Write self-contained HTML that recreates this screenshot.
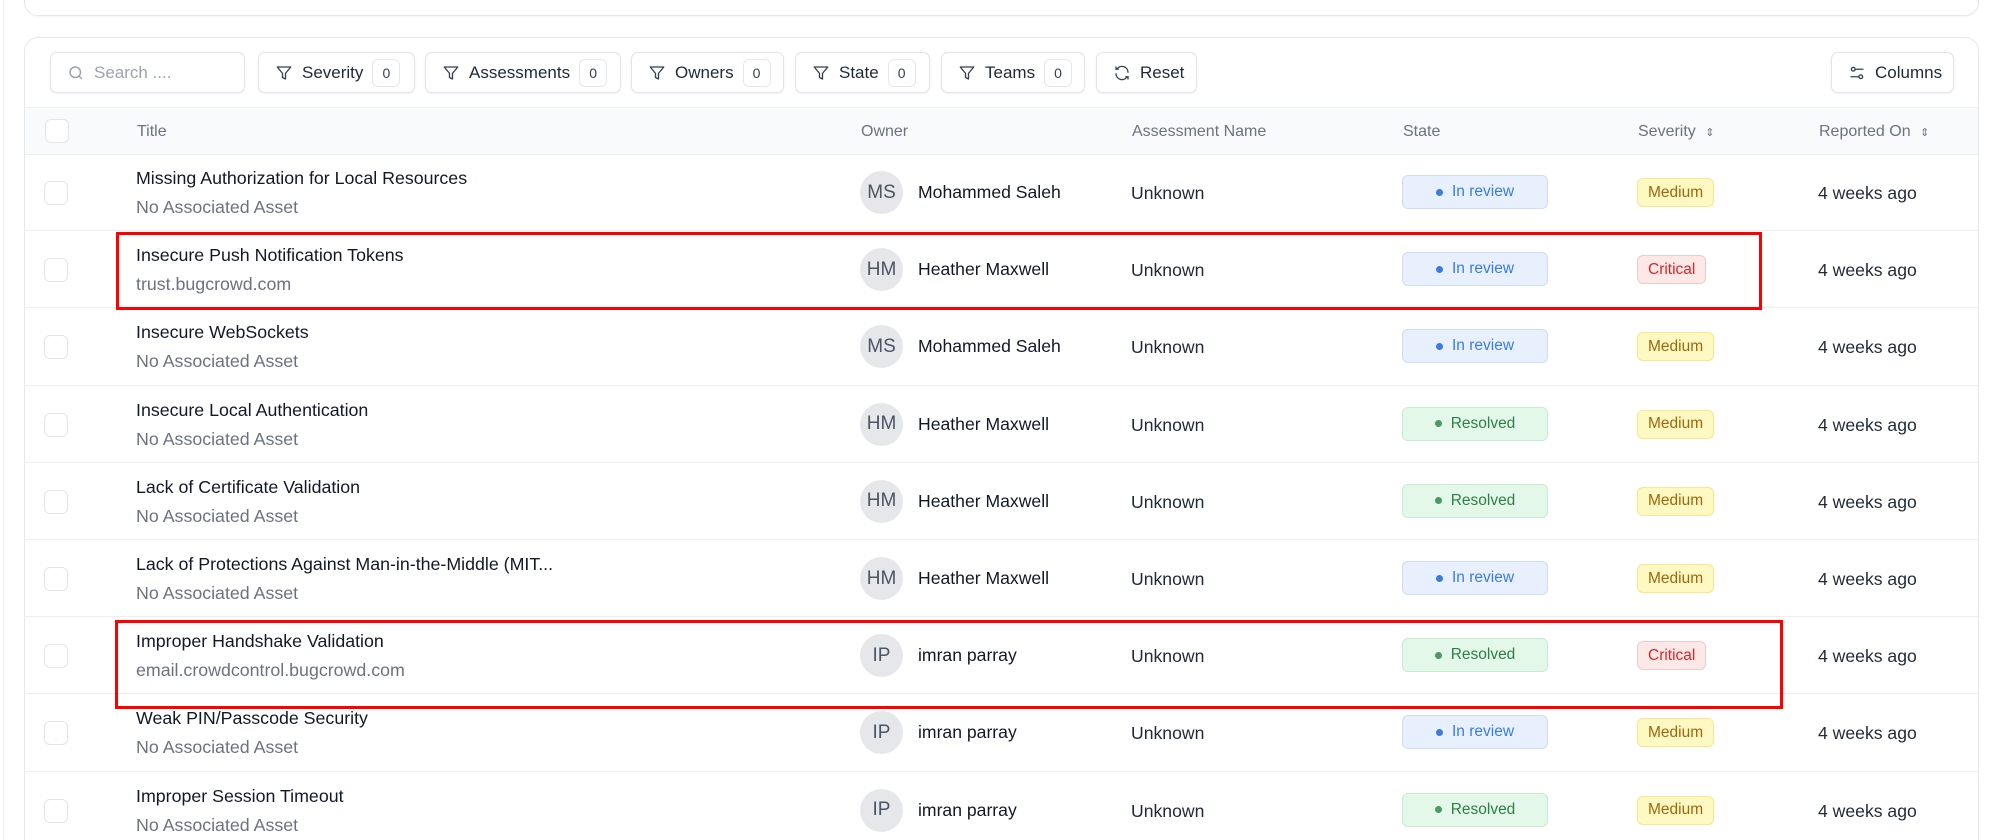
<!DOCTYPE html>
<html style="width:2000px;height:840px;overflow:hidden"><head><meta charset="utf-8"><style>
*{box-sizing:border-box;margin:0;padding:0}
body{width:2000px;height:840px;overflow:hidden;background:#fff;font-family:"Liberation Sans",sans-serif;color:#111827;position:relative}
.edge{position:absolute;left:3px;top:0;width:1px;height:840px;background:#eef0f2}
.card1{position:absolute;left:24px;top:-20px;width:1955px;height:36px;border:1px solid #e5e7eb;border-radius:14px;box-shadow:0 1px 2px rgba(0,0,0,.04)}
.card2{position:absolute;left:24px;top:37px;width:1955px;height:830px;border:1px solid #e5e7eb;border-radius:14px;overflow:hidden}
.btn{position:absolute;top:14px;height:41px;border:1px solid #e1e4e8;border-radius:7px;background:#fff;box-shadow:0 1px 2px rgba(0,0,0,.06);display:flex;align-items:center;font-size:17px;color:#1f2937;padding-left:16px}
.btn svg{margin-right:9px}
.cnt{margin-left:9px;width:28px;height:28px;border:1px solid #e5e7eb;border-radius:6px;display:flex;align-items:center;justify-content:center;font-size:14px;color:#374151}
.head{position:absolute;left:0;top:69px;width:100%;height:48px;background:#f9fafb;border-top:1px solid #eceef0;border-bottom:1px solid #eceef0}
.h{position:absolute;top:15px;font-size:16px;color:#6b7280}
.cb{position:absolute;left:20px;width:24px;height:24px;border:1px solid #e2e5e9;border-radius:6px;background:#fff}
.row{position:absolute;left:0;width:100%;height:77.2px;border-bottom:1.5px solid #eceef0}
.t{position:absolute;left:112px;top:14px;font-size:17.8px;color:#111827}
.s{position:absolute;left:112px;top:43px;font-size:17.8px;color:#6b7280}
.av{position:absolute;left:836px;top:17px;width:43px;height:43px;border-radius:50%;background:#e5e7eb;color:#4b5563;font-size:19px;display:flex;align-items:center;justify-content:center}
.on{position:absolute;left:894px;top:28px;font-size:17.6px;color:#111827;font-weight:500}
.an{position:absolute;left:1107px;top:29px;font-size:17.6px;color:#1f2937}
.st{position:absolute;left:1378px;top:21px;width:146px;height:34px;border-radius:6px;font-size:15.5px;display:flex;align-items:center;justify-content:center}
.st i{width:7px;height:7px;border-radius:50%;margin-right:9px;display:inline-block}
.rev{background:#e8f0fd;border:1px solid #cddcf7;color:#3b7be0}.rev i{background:#3b7be0}
.res{background:#e3f8e9;border:1px solid #c4eecf;color:#2f7d47}.res i{background:#4a9a63}
.sv{position:absolute;left:1613px;top:24px;height:29px;border-radius:6px;font-size:15.5px;display:flex;align-items:center;padding:0 10px}
.med{background:#fef9c3;border:1px solid #fbe68a;color:#a1650a}
.crit{background:#fde8e8;border:1px solid #f6c9c9;color:#d9262a}
.rp{position:absolute;left:1794px;top:29px;font-size:17.6px;color:#1f2937}
.red{position:absolute;border:3.5px solid #ff0000}
</style></head><body>
<div class="edge"></div>
<div class="card1"></div>
<div class="card2">
<div class="btn" style="left:25px;width:195px;color:#9ca3af"><svg width="18" height="18" viewBox="0 0 24 24" fill="none" stroke="#9ca3af" stroke-width="2"><circle cx="11" cy="11" r="7"/><path d="M20 20l-4-4"/></svg>Search ....</div>
<div class="btn" style="left:233px;width:157px"><svg width="18" height="18" viewBox="0 0 24 24" fill="none" stroke="#374151" stroke-width="1.8" stroke-linejoin="round"><path d="M3 4h18l-7 8.5V20l-4-2v-5.5z"/></svg>Severity<span class="cnt">0</span></div>
<div class="btn" style="left:400px;width:196px"><svg width="18" height="18" viewBox="0 0 24 24" fill="none" stroke="#374151" stroke-width="1.8" stroke-linejoin="round"><path d="M3 4h18l-7 8.5V20l-4-2v-5.5z"/></svg>Assessments<span class="cnt">0</span></div>
<div class="btn" style="left:606px;width:153px"><svg width="18" height="18" viewBox="0 0 24 24" fill="none" stroke="#374151" stroke-width="1.8" stroke-linejoin="round"><path d="M3 4h18l-7 8.5V20l-4-2v-5.5z"/></svg>Owners<span class="cnt">0</span></div>
<div class="btn" style="left:770px;width:135px"><svg width="18" height="18" viewBox="0 0 24 24" fill="none" stroke="#374151" stroke-width="1.8" stroke-linejoin="round"><path d="M3 4h18l-7 8.5V20l-4-2v-5.5z"/></svg>State<span class="cnt">0</span></div>
<div class="btn" style="left:916px;width:144px"><svg width="18" height="18" viewBox="0 0 24 24" fill="none" stroke="#374151" stroke-width="1.8" stroke-linejoin="round"><path d="M3 4h18l-7 8.5V20l-4-2v-5.5z"/></svg>Teams<span class="cnt">0</span></div>
<div class="btn" style="left:1071px;width:101px"><svg width="18" height="18" viewBox="0 0 24 24" fill="none" stroke="#374151" stroke-width="1.8" stroke-linecap="round"><path d="M20 11a8 8 0 0 0-14.5-4.5M4 4v3h3M4 13a8 8 0 0 0 14.5 4.5M20 20v-3h-3"/></svg>Reset</div>
<div class="btn" style="left:1806px;width:123px"><svg width="18" height="18" viewBox="0 0 24 24" fill="none" stroke="#374151" stroke-width="1.8" stroke-linecap="round"><circle cx="7" cy="7" r="2.5"/><path d="M10 7h10M4 17h10"/><circle cx="17" cy="17" r="2.5"/></svg>Columns</div>
<div class="head">
<div class="cb" style="top:11px"></div>
<div class="h" style="left:112px">Title</div>
<div class="h" style="left:836px">Owner</div>
<div class="h" style="left:1107px">Assessment Name</div>
<div class="h" style="left:1378px">State</div>
<div class="h" style="left:1613px">Severity <span style="font-size:11px;margin-left:5px">⇕</span></div>
<div class="h" style="left:1794px">Reported On <span style="font-size:11px;margin-left:5px">⇕</span></div>
</div>
</div>
<div id="rows" style="position:absolute;left:24px;top:154px;width:1955px;height:686px;overflow:hidden">
<div class="row" style="top:0"><div class="cb" style="top:27px"></div><div class="t">Missing Authorization for Local Resources</div><div class="s">No Associated Asset</div><div class="av">MS</div><div class="on">Mohammed Saleh</div><div class="an">Unknown</div><div class="st rev"><i></i>In review</div><div class="sv med">Medium</div><div class="rp">4 weeks ago</div></div>
<div class="row" style="top:77.2px"><div class="cb" style="top:27px"></div><div class="t">Insecure Push Notification Tokens</div><div class="s">trust.bugcrowd.com</div><div class="av">HM</div><div class="on">Heather Maxwell</div><div class="an">Unknown</div><div class="st rev"><i></i>In review</div><div class="sv crit">Critical</div><div class="rp">4 weeks ago</div></div>
<div class="row" style="top:154.4px"><div class="cb" style="top:27px"></div><div class="t">Insecure WebSockets</div><div class="s">No Associated Asset</div><div class="av">MS</div><div class="on">Mohammed Saleh</div><div class="an">Unknown</div><div class="st rev"><i></i>In review</div><div class="sv med">Medium</div><div class="rp">4 weeks ago</div></div>
<div class="row" style="top:231.6px"><div class="cb" style="top:27px"></div><div class="t">Insecure Local Authentication</div><div class="s">No Associated Asset</div><div class="av">HM</div><div class="on">Heather Maxwell</div><div class="an">Unknown</div><div class="st res"><i></i>Resolved</div><div class="sv med">Medium</div><div class="rp">4 weeks ago</div></div>
<div class="row" style="top:308.8px"><div class="cb" style="top:27px"></div><div class="t">Lack of Certificate Validation</div><div class="s">No Associated Asset</div><div class="av">HM</div><div class="on">Heather Maxwell</div><div class="an">Unknown</div><div class="st res"><i></i>Resolved</div><div class="sv med">Medium</div><div class="rp">4 weeks ago</div></div>
<div class="row" style="top:386px"><div class="cb" style="top:27px"></div><div class="t">Lack of Protections Against Man-in-the-Middle (MIT...</div><div class="s">No Associated Asset</div><div class="av">HM</div><div class="on">Heather Maxwell</div><div class="an">Unknown</div><div class="st rev"><i></i>In review</div><div class="sv med">Medium</div><div class="rp">4 weeks ago</div></div>
<div class="row" style="top:463.2px"><div class="cb" style="top:27px"></div><div class="t">Improper Handshake Validation</div><div class="s">email.crowdcontrol.bugcrowd.com</div><div class="av">IP</div><div class="on">imran parray</div><div class="an">Unknown</div><div class="st res"><i></i>Resolved</div><div class="sv crit">Critical</div><div class="rp">4 weeks ago</div></div>
<div class="row" style="top:540.4px"><div class="cb" style="top:27px"></div><div class="t">Weak PIN/Passcode Security</div><div class="s">No Associated Asset</div><div class="av">IP</div><div class="on">imran parray</div><div class="an">Unknown</div><div class="st rev"><i></i>In review</div><div class="sv med">Medium</div><div class="rp">4 weeks ago</div></div>
<div class="row" style="top:617.6px"><div class="cb" style="top:27px"></div><div class="t">Improper Session Timeout</div><div class="s">No Associated Asset</div><div class="av">IP</div><div class="on">imran parray</div><div class="an">Unknown</div><div class="st res"><i></i>Resolved</div><div class="sv med">Medium</div><div class="rp">4 weeks ago</div></div>
</div>
<div class="red" style="left:116px;top:232px;width:1646px;height:78px"></div>
<div class="red" style="left:115px;top:620px;width:1668px;height:89px"></div>
</body></html>
